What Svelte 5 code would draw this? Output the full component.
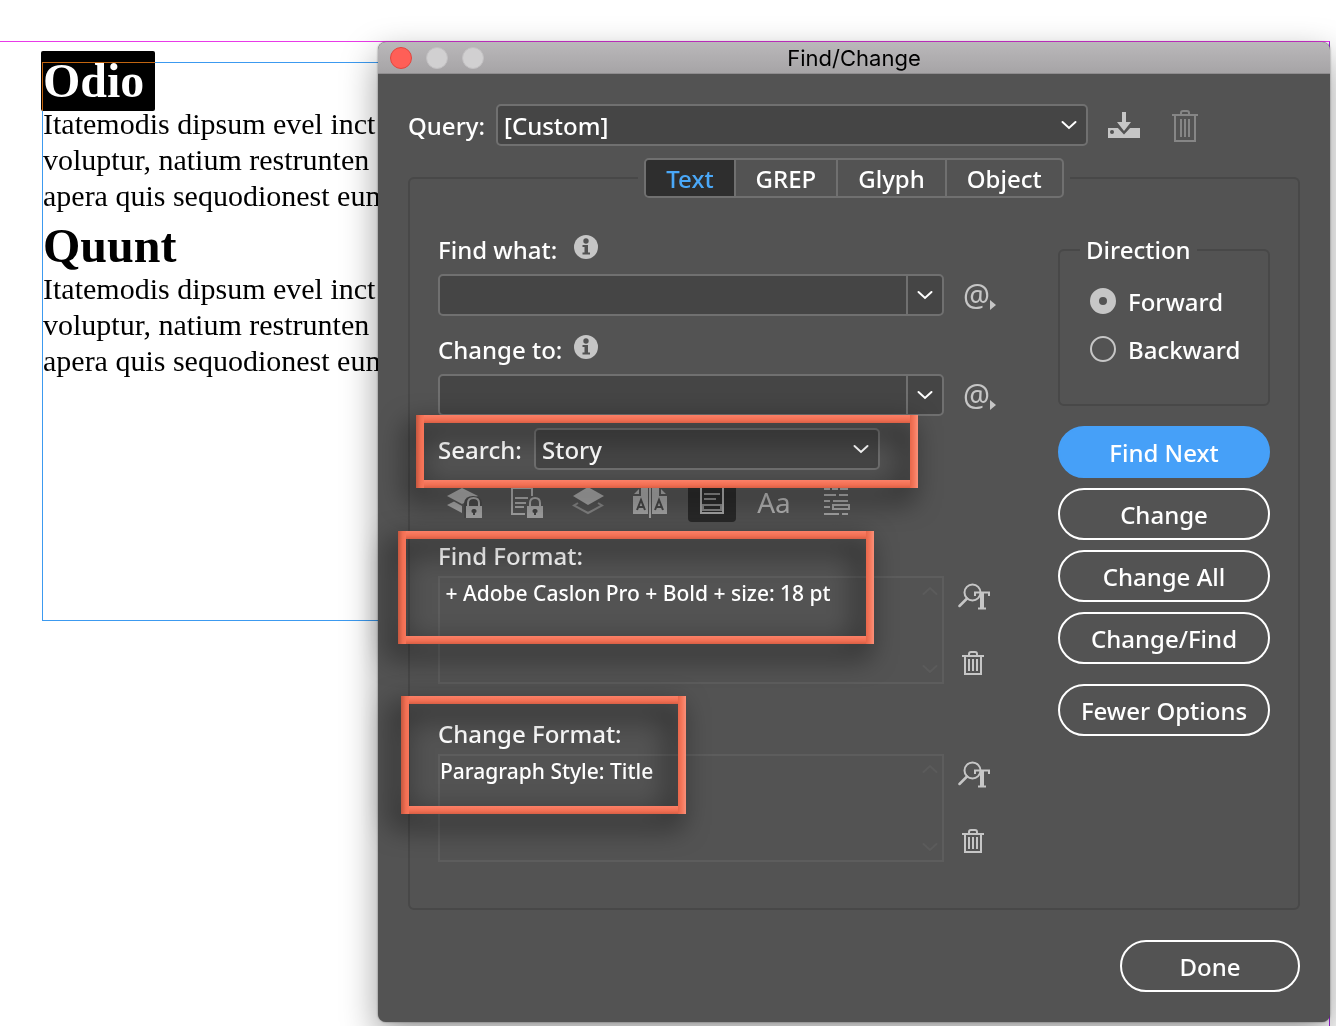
<script lang="ts">
  let query = "[Custom]"
  let tab = "Text"
  let findWhat = ""
  let changeTo = ""
  let search = "Story"
  let direction = "Forward"
  let findFormat = " + Adobe Caslon Pro + Bold + size: 18 pt"
  let changeFormat = "Paragraph Style: Title"

  const tabs = ["Text", "GREP", "Glyph", "Object"]
  const directions = ["Forward", "Backward"]
  const actions = ["Find Next", "Change", "Change All", "Change/Find"]
  const story = ["Odio", "Quunt"]
</script>

{#snippet chevron()}
  <svg class="chevron" width="16" height="10" viewBox="0 0 16 10" aria-hidden="true">
    <path d="M1.5 2 L8 8 L14.5 2" fill="none" stroke="currentColor" stroke-width="2" stroke-linecap="round" />
  </svg>
{/snippet}

{#snippet info()}
  <svg width="24" height="24" viewBox="0 0 24 24" aria-hidden="true">
    <circle cx="12" cy="12" r="12" fill="#c6c6c6" />
    <circle cx="12" cy="6" r="2.700" fill="#535353" />
    <path d="M8.500 10 H14 V17.500 H16 V19.500 H8.500 V17.500 H10.500 V12 H8.500 Z" fill="#535353" />
  </svg>
{/snippet}

{#snippet special()}
  <button class="icon" aria-label="Special characters to search for">
    <span class="at">@</span>
    <svg width="6" height="12" viewBox="0 0 6 12" aria-hidden="true"><path d="M0 1 L6 6 L0 11 Z" fill="#c6c6c6" /></svg>
  </button>
{/snippet}

{#snippet formatButtons(kind)}
  <div class="side">
    <button class="icon" aria-label="Specify attributes to {kind}">
      <svg width="32" height="28" viewBox="0 0 32 28" fill="none" stroke="#c6c6c6" aria-hidden="true">
        <circle cx="14.500" cy="9.500" r="8" stroke-width="2" />
        <path d="M9 15.500 L1.500 23" stroke-width="2.500" stroke-linecap="round" />
        <path d="M17 13 V9.500 H31 V13" stroke-width="2" />
        <path d="M24 9 V25" stroke-width="4" />
        <path d="M20 25.500 H28" stroke-width="2" />
      </svg>
    </button>
    <button class="icon" aria-label="Clear attributes to {kind}">
      <svg width="22" height="24" viewBox="0 0 22 24" fill="none" stroke="#c6c6c6" stroke-width="2" aria-hidden="true">
        <path d="M0 5 H22 M3 5 V23 H19 V5 M7 5 V3 Q7 1 9 1 H13 Q15 1 15 3 V5 M7 8 V20 M11 8 V20 M15 8 V20" />
      </svg>
    </button>
  </div>
{/snippet}

<div class="desktop">
  <div class="page">
    <article class="story">
      {#each story as title, index}
        <h2><span class:selected={index === 0}>{title}</span></h2>
        <p>Itatemodis dipsum evel inct<br />voluptur, natium restrunten<br />apera quis sequodionest eum</p>
      {/each}
    </article>
  </div>

  <section class="dialog" aria-label="Find/Change">
    <header class="titlebar">
      <div class="lights">
        <button class="light close" aria-label="Close"></button>
        <button class="light" aria-label="Minimize" disabled></button>
        <button class="light" aria-label="Zoom" disabled></button>
      </div>
      <h1>Find/Change</h1>
    </header>

    <div class="body">
      <div class="query">
        <label for="query">Query:</label>
        <div class="select">
          <select id="query" bind:value={query}>
            <option>[Custom]</option>
          </select>
          {@render chevron()}
        </div>
        <button class="icon save" aria-label="Save query">
          <svg width="32" height="28" viewBox="0 0 32 28" aria-hidden="true">
            <path d="M0 17 H32 V27 H0 Z" fill="#c6c6c6" />
            <circle cx="4" cy="21" r="2" fill="#535353" />
            <path d="M8 15 L16 23.500 L24 15 Z" fill="#535353" />
            <path d="M14 1 H18 V11 H23 L16 20 L9 11 H14 Z" fill="#c6c6c6" />
          </svg>
        </button>
        <button class="icon" aria-label="Delete query" disabled>
          <svg width="26" height="34" viewBox="0 0 26 34" fill="none" stroke="#868686" stroke-width="2" aria-hidden="true">
            <path d="M0 7 H26 M3 7 V33 H23 V7 M9 7 V5 Q9 3 11 3 H15 Q17 3 17 5 V7 M9 11 V29 M13 11 V29 M17 11 V29" />
          </svg>
        </button>
      </div>

      <fieldset class="group">
        <legend class="tabs-legend">
          <div class="tabs" role="tablist">
            {#each tabs as name}
              <button role="tab" class="tab" class:active={tab === name} aria-selected={tab === name} on:click={() => (tab = name)}>{name}</button>
            {/each}
          </div>
        </legend>

        <div class="columns">
          <div class="main">
            <div class="field">
              <div class="caption"><label for="find-what">Find what:</label>{@render info()}</div>
              <div class="row">
                <div class="combo">
                  <input id="find-what" type="text" bind:value={findWhat} />
                  <button aria-label="Recent searches">{@render chevron()}</button>
                </div>
                {@render special()}
              </div>
            </div>

            <div class="field">
              <div class="caption"><label for="change-to">Change to:</label>{@render info()}</div>
              <div class="row">
                <div class="combo">
                  <input id="change-to" type="text" bind:value={changeTo} />
                  <button aria-label="Recent replacements">{@render chevron()}</button>
                </div>
                {@render special()}
              </div>
            </div>

            <div class="search">
              <label for="search">Search:</label>
              <div class="select">
                <select id="search" bind:value={search}>
                  <option>Story</option>
                  <option>Document</option>
                </select>
                {@render chevron()}
              </div>
              <div class="mark mark-search"></div>
            </div>

            <div class="scope">
              <button aria-label="Include locked layers">
                <svg width="36" height="32" viewBox="0 0 36 32" aria-hidden="true">
                  <path d="M1 10 L16 2 L32 10 L24 14 L16 18 Z" fill="#a5a5a5" />
                  <path d="M1 19 L8 15.500 L16 20 V27 Z" fill="#a5a5a5" />
                  <path d="M18 19 V17 Q19 10 27 10 Q35 10 36 17 V32 H18 Z" fill="#494949" />
                  <path d="M22 21 V17 Q22 12 27.500 12 Q33 12 33 17 V21" fill="none" stroke="#a5a5a5" stroke-width="2" />
                  <path d="M20 20 H36 V32 H20 Z" fill="#a5a5a5" />
                  <path d="M28 23 a2 2 0 0 1 1 4 V29 H27 V27 A2 2 0 0 1 28 23 Z" fill="#444" />
                </svg>
              </button>
              <button aria-label="Include locked stories">
                <svg width="34" height="32" viewBox="0 0 34 32" fill="none" stroke="#a5a5a5" stroke-width="2" aria-hidden="true">
                  <path d="M16 28 H3 V2 H23 V10 M6 12 H19 M6 17 H17 M6 21 H15" />
                  <path d="M21 21 V17 Q21 12 26 12 Q31 12 31 17 V21" />
                  <path d="M18 20 H34 V32 H18 Z" fill="#a5a5a5" stroke="none" />
                  <path d="M26 23 a2 2 0 0 1 1 4 V29 H25 V27 A2 2 0 0 1 26 23 Z" fill="#444" stroke="none" />
                </svg>
              </button>
              <button aria-label="Include hidden layers">
                <svg width="32" height="32" viewBox="0 0 32 32" aria-hidden="true">
                  <path d="M6 17 L2 19.500 L16 27 L30 19.500 L26 17" fill="none" stroke="#858585" stroke-width="2" />
                  <path d="M1 10 L16 1 L32 10 L16 19 Z" fill="#a5a5a5" />
                </svg>
              </button>
              <button aria-label="Include master pages">
                <svg width="34" height="32" viewBox="0 0 34 32" aria-hidden="true">
                  <path d="M8 2 H15 V28 H0 V10 H8 Z M6 3 V8 H1 Z M19 2 H26 V10 H34 V28 H19 Z M28 3 V8 H33 Z" fill="#a5a5a5" />
                  <path d="M17 0 V32" stroke="#a5a5a5" stroke-width="2" />
                  <path d="M4 24 L8 14 L12 24 M5 21 H11 M22 24 L26 14 L30 24 M23 21 H29" fill="none" stroke="#474747" stroke-width="2" />
                </svg>
              </button>
              <button class="on" aria-label="Include footnotes">
                <svg width="24" height="32" viewBox="0 0 24 32" fill="none" stroke="#a5a5a5" stroke-width="2" aria-hidden="true">
                  <path d="M1 1 H23 V27 H1 Z" />
                  <path d="M4 8 H20 M4 13 H16" stroke="#858585" />
                  <path d="M3 19 H21 V24 H3 Z" stroke="#858585" />
                </svg>
              </button>
              <button class="case" aria-label="Case sensitive">Aa</button>
              <button aria-label="Whole word">
                <svg width="28" height="32" viewBox="0 0 28 32" fill="none" stroke="#a5a5a5" stroke-width="2" aria-hidden="true">
                  <path d="M2 3 H8 M10 3 H16 M18 3 H26 M2 9 H14 M17 9 H26 M2 15 H8 M11 15 H26 M2 21 H8 M11 19 H27 V23 H11 Z M2 28 H17 M20 28 H26" />
                </svg>
              </button>
            </div>

            <div class="format">
              <div class="caption"><label for="find-format">Find Format:</label></div>
              <div class="row">
                <div class="box">
                  <textarea id="find-format" readonly value={findFormat}></textarea>
                  <div class="scroller"><span class="up">{@render chevron()}</span>{@render chevron()}</div>
                </div>
                {@render formatButtons("find")}
              </div>
              <div class="mark mark-find"></div>
            </div>

            <div class="format">
              <div class="caption"><label for="change-format">Change Format:</label></div>
              <div class="row">
                <div class="box">
                  <textarea id="change-format" readonly value={changeFormat}></textarea>
                  <div class="scroller"><span class="up">{@render chevron()}</span>{@render chevron()}</div>
                </div>
                {@render formatButtons("change")}
              </div>
              <div class="mark mark-change"></div>
            </div>
          </div>

          <div class="aside">
            <fieldset class="direction">
              <legend>Direction</legend>
              {#each directions as name}
                <label><input type="radio" name="direction" value={name} bind:group={direction} />{name}</label>
              {/each}
            </fieldset>
            <div class="actions">
              {#each actions as name, index}
                <button class="pill" class:primary={index === 0}>{name}</button>
              {/each}
            </div>
            <button class="pill">Fewer Options</button>
          </div>
        </div>
      </fieldset>

      <footer><button class="pill done">Done</button></footer>
    </div>
  </section>
</div>

<style>
  :global(body) {
    background: #fff;
  }

  .desktop {
    position: relative;
    display: flex;
    min-height: 100vh;
    overflow: hidden;
    background: #fff;
    font-family: "Noto Sans", sans-serif;
    font-size: 24px;
    font-weight: 500;
    color: #fff;
  }

  .desktop * {
    box-sizing: border-box;
  }

  button,
  input,
  select,
  textarea {
    margin: 0;
    padding: 0;
    border: 0;
    background: none;
    color: inherit;
    font: inherit;
  }

  svg {
    display: block;
    flex: none;
  }

  /* document page behind the dialog */
  .page {
    flex: 1;
    margin: 41px 6px 0 0;
    padding: 20px 42px;
    border-top: 1px solid #e83ae8;
    border-right: 1px solid #a020e0;
  }

  .story {
    height: 559px;
    border: 1px solid #3c9af0;
    font-family: "Liberation Serif", serif;
    font-size: 30px;
    font-weight: 400;
    line-height: 36px;
    color: #000;
  }

  .story h2 {
    margin: 0;
    padding-top: 6px;
    font-size: 48px;
    line-height: 51px;
    font-weight: 700;
  }

  .story h2:first-child {
    margin-top: -14px;
  }

  .story p {
    margin: 0;
    white-space: nowrap;
  }

  .selected {
    position: relative;
  }

  /* inverts whatever it covers */
  .selected::after {
    content: "";
    position: absolute;
    inset: -3px -11px -4px -2px;
    border-radius: 2px;
    background: #fff;
    mix-blend-mode: difference;
  }

  .dialog {
    position: absolute;
    top: 42px;
    left: 378px;
    right: 6px;
    border-radius: 8px;
    background: #535353;
    box-shadow: 0 0 2px rgba(0, 0, 0, 0.5), 0 14px 36px rgba(0, 0, 0, 0.4);
  }

  .titlebar {
    display: grid;
    grid-template-columns: 1fr auto 1fr;
    align-items: center;
    height: 32px;
    padding: 0 12px;
    border-bottom: 1px solid #8f8d8f;
    border-radius: 8px 8px 0 0;
    background: linear-gradient(#bab8ba, #a6a4a6);
    color: #000;
  }

  .titlebar h1 {
    margin: 0;
    font: 400 22px/30px Inter, sans-serif;
  }

  .lights {
    display: flex;
    gap: 14px;
  }

  .light {
    width: 22px;
    height: 22px;
    border: 1px solid #c2c0c2;
    border-radius: 50%;
    background: #d1d0d1;
  }

  .close {
    border-color: #e2463f;
    background: #ff5f57;
  }

  .body {
    padding: 30px;
  }

  .query {
    display: flex;
    align-items: center;
    height: 42px;
  }

  .query .select {
    flex: 1;
    margin-left: 12px;
  }

  .query label {
    width: 76px;
  }

  .select {
    position: relative;
    height: 42px;
  }

  select {
    width: 100%;
    height: 42px;
    padding: 0 6px;
    border: 2px solid #707070;
    border-radius: 5px;
    background: #454545;
    appearance: none;
  }

  .select .chevron {
    position: absolute;
    top: 16px;
    right: 11px;
    pointer-events: none;
  }

  .icon {
    display: flex;
    align-items: center;
    justify-content: center;
    width: 40px;
    height: 40px;
    color: #c6c6c6;
  }

  .query .icon {
    width: 32px;
    margin-left: 20px;
  }

  .query .icon:last-child {
    width: 30px;
    margin: 0 100px 0 30px;
  }

  .group {
    min-width: 0;
    margin: 12px 0 0;
    padding: 0 28px 46px;
    border: 2px solid #484848;
    border-radius: 6px;
  }

  .tabs-legend {
    margin: 0 auto;
    padding: 0 6px;
  }

  .tabs {
    display: flex;
    height: 40px;
    border: 2px solid #707070;
    border-radius: 5px;
    overflow: hidden;
  }

  .tab {
    padding: 0 20px;
  }

  .tab + .tab {
    border-left: 2px solid #707070;
  }

  .tab.active {
    background: #2e2e2e;
    color: #4aa8f8;
  }

  .columns {
    display: flex;
    gap: 60px;
    padding-top: 34px;
  }

  .main {
    flex: 1;
    min-width: 0;
  }

  .field {
    margin-bottom: 16px;
  }

  .caption {
    display: flex;
    align-items: center;
    gap: 10px;
    height: 34px;
  }

  .caption label {
    min-width: 126px;
  }

  .caption svg {
    margin-bottom: 4px;
  }

  .row {
    display: flex;
    gap: 14px;
  }

  .field .row {
    align-items: center;
    margin-top: 8px;
  }

  .field .icon {
    justify-content: flex-end;
    height: 42px;
  }

  .combo {
    flex: 1;
    display: flex;
    height: 42px;
    border: 2px solid #707070;
    border-radius: 5px;
    background: #454545;
  }

  .combo input {
    flex: 1;
    min-width: 0;
    padding: 0 6px;
  }

  .combo button {
    display: flex;
    align-items: center;
    justify-content: center;
    width: 36px;
    border-left: 2px solid #707070;
  }

  .at {
    font-size: 30px;
    font-weight: 400;
    line-height: 36px;
  }

  .icon .at + svg {
    margin: 20px 2px 0 0;
  }

  .search {
    position: relative;
    display: flex;
    align-items: center;
    margin-top: -4px;
  }

  .search label {
    width: 96px;
  }

  .search .select {
    width: 346px;
  }

  .scope {
    display: flex;
    gap: 14px;
    margin: 12px 0 16px 2px;
  }

  .scope button {
    display: flex;
    align-items: center;
    justify-content: center;
    width: 48px;
    height: 40px;
    border-radius: 4px;
  }

  .scope .on {
    background: #2a2a2a;
  }

  .scope .case {
    color: #b4b4b4;
    font-size: 28px;
    font-weight: 400;
    line-height: 36px;
  }

  .format {
    position: relative;
    margin-bottom: 32px;
  }

  .format:last-child {
    margin-bottom: 0;
  }

  .format .row {
    margin-top: 4px;
  }

  .box {
    flex: 1;
    display: flex;
    height: 108px;
    border: 2px solid #5d5d5d;
  }

  .box textarea {
    flex: 1;
    font-size: 21px;
    line-height: 30px;
    outline: 0;
    resize: none;
  }

  .scroller {
    display: flex;
    flex-direction: column;
    justify-content: space-between;
    padding: 8px 4px;
    color: #5b5b5b;
  }

  .up {
    transform: rotate(180deg);
  }

  .side {
    display: flex;
    flex-direction: column;
    gap: 26px;
    padding-top: 1px;
  }

  .side .icon {
    justify-content: flex-start;
  }

  .side .icon:last-child {
    padding-left: 4px;
  }

  /* highlighted areas */
  .mark {
    position: absolute;
    pointer-events: none;
    background:
      linear-gradient(90deg, #c4573f, #f26f53 60%, #f8765a) left / 8px 100% no-repeat,
      linear-gradient(90deg, #e8674b, #f5775b 50%, #fb9079) right / 8px 100% no-repeat,
      linear-gradient(#fb8067, #f26f53 60%, #d95f45) top / 100% 8px no-repeat,
      linear-gradient(#fb8067, #f26f53 60%, #d95f45) bottom / 100% 8px no-repeat;
    filter: drop-shadow(-7px 11px 14px rgba(0, 0, 0, 0.85));
  }

  .mark-search {
    left: -22px;
    top: -13px;
    width: 502px;
    height: 73px;
  }

  .mark-find {
    left: -40px;
    top: -7px;
    width: 476px;
    height: 113px;
  }

  .mark-change {
    left: -37px;
    top: -20px;
    width: 285px;
    height: 118px;
  }

  .aside {
    display: flex;
    flex-direction: column;
    gap: 20px;
    width: 212px;
  }

  .direction {
    min-width: 0;
    height: 174px;
    margin: 0;
    padding: 9px 30px;
    border: 2px solid #484848;
    border-radius: 6px;
  }

  .direction legend {
    margin-left: -10px;
    padding: 0 6px;
    line-height: 36px;
  }

  .direction label {
    display: flex;
    align-items: center;
    gap: 12px;
    height: 48px;
  }

  .direction input {
    flex: none;
    width: 26px;
    height: 26px;
    border: 2px solid #c6c6c6;
    border-radius: 50%;
    appearance: none;
  }

  .direction input:checked {
    border-width: 9px;
  }

  .actions {
    display: flex;
    flex-direction: column;
    gap: 10px;
  }

  .pill {
    height: 52px;
    border: 2px solid #fff;
    border-radius: 26px;
  }

  .pill.primary {
    border-color: #46a0f8;
    background: #46a0f8;
  }

  footer {
    display: flex;
    justify-content: flex-end;
    margin-top: 30px;
  }

  .done {
    width: 180px;
  }
</style>
